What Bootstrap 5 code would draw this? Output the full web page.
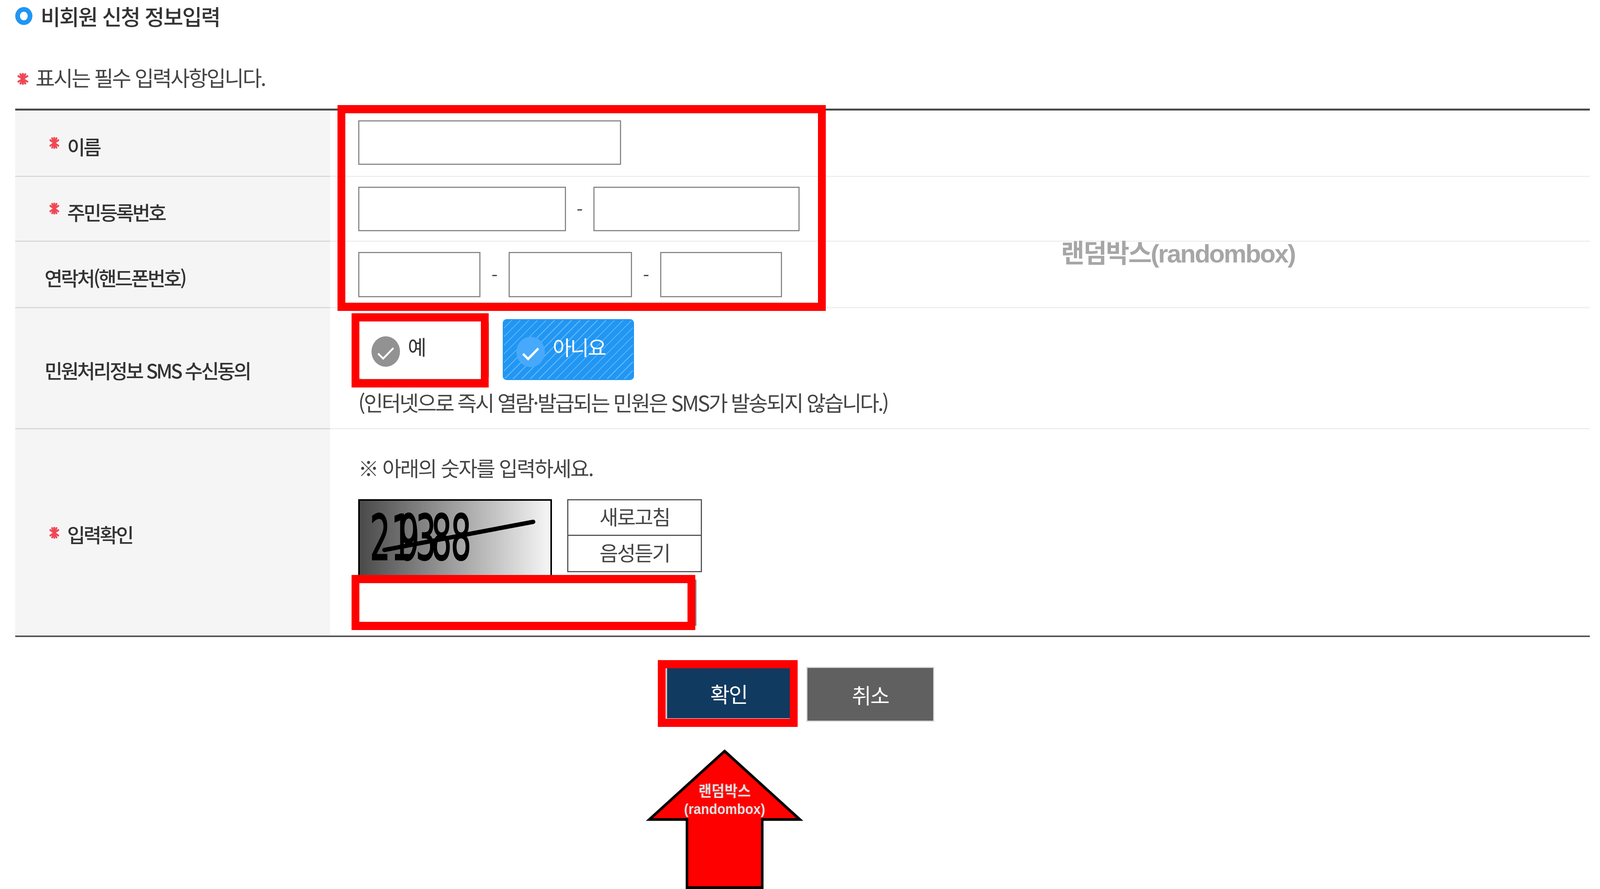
<!doctype html>
<html lang="ko">
<head>
<meta charset="utf-8">
<title>비회원 신청 정보입력</title>
<link href="https://cdn.jsdelivr.net/npm/bootstrap@5.3.0/dist/css/bootstrap.min.css" rel="stylesheet">
<style>
html,body{margin:0;background:#fff;overflow:hidden}
body{font-family:"Noto Sans CJK KR","Liberation Sans",sans-serif;color:#333}
.page-wrap{position:relative;width:100%;height:100vh;padding:0 26px 0 39px;overflow:hidden}
.head-row{height:80px;gap:21px;color:#333}
.head-title{font-size:55px;font-weight:500;letter-spacing:-2.500px;line-height:80px;margin:0}
.ring-mark{width:44px;height:46px;border:12px solid #2196f3;border-radius:50%;flex:none;margin-top:2px}
.req-note{height:198px;padding-top:83px;font-size:54px;letter-spacing:-3.6px;line-height:70px;color:#444;gap:17px}
.req-note svg{width:31px;height:30px;margin-top:24px}
.form-grid{width:100%;border-collapse:collapse;table-layout:fixed;border-top:5px solid #4a4a4a;border-bottom:4px solid #555}
.form-grid th{width:806px;background:#f5f5f5;padding:0 0 0 75px;font-size:50px;font-weight:500;letter-spacing:-4.3px;color:#333;border-bottom:3px solid #d8d8d8;vertical-align:middle}
.form-grid th.th-low{padding-top:16px}
.form-grid th.th-mid{padding-top:10px}
.form-grid td{padding:0 0 0 72px;border-bottom:3px solid #eee;vertical-align:middle}
.form-grid tr:last-child th,.form-grid tr:last-child td{border-bottom:0}
.form-grid td.cell-top{vertical-align:top}
.r-a{height:171px}.r-b{height:166px}.r-c{height:170px}.r-d{height:310px}.r-e{height:531px}
.req-star{width:28px;height:30px;margin:-32px 19px 0 11px;vertical-align:middle}
.form-grid th .star-e{margin-top:-24px}
.box-input{display:block;height:114px;border:3px solid #8a8a8a;border-radius:0;background:#fff;padding:0}
.w-a{width:673px;margin-top:-3px}.w-b{width:532px}.w-c{width:528px}
.w-d{width:313px;height:116px}.w-e{width:316px;height:116px}.w-f{width:312px;height:116px}
.w-g{width:866px;height:118px;margin-top:10px}
.dash-mark{font-size:46px;color:#444;line-height:1;text-align:center}
.dash-b{width:70px}.dash-c{width:72px}
.check-btn{height:156px;border-radius:10px;font-size:52px;letter-spacing:-3px;padding:0 0 0 34px;gap:20px;line-height:1;display:flex;align-items:center;border:0}
.check-btn span{margin-top:-14px}
.check-btn svg{width:73px;height:78px;flex:none;margin-top:12px}
.btn-off{width:335px;background:#fff;color:#333;border-bottom:3px solid #9a9a9a;border-right:3px solid #bbb}
.btn-on{width:336px;padding-left:32px;background-color:#2196f3;color:#fff;border:3px solid #2196f3;background-clip:padding-box;background-image:repeating-linear-gradient(135deg,#2196f3 0 13px,#5bb4f8 13px 15.500px)}
.choice-row{gap:35px}
.form-grid td.cell-d{padding-top:28px}
.form-grid td.cell-e{padding-top:63px}
.sms-note{font-size:54px;letter-spacing:-4px;line-height:70px;margin:22px 0 0;color:#444;white-space:nowrap}
.captcha-hint{font-size:53px;letter-spacing:-3px;line-height:70px;margin:0 0 46px;color:#444}
.captcha-img{width:496px;height:196px;border:4px solid #000;border-bottom:0;background:linear-gradient(90deg,#4a4a4a,#f6f6f6);flex:none}
.captcha-img svg{display:block;overflow:visible}
.cap-btns{width:345px;margin-left:39px}
.cap-btn{display:block;width:100%;height:94px;border:3px solid #555;border-radius:0;background:#fff;color:#444;font-size:52px;letter-spacing:-3px;line-height:1;padding:0 0 6px}
.cap-btn+.cap-btn{margin-top:-3px;height:96px}
.action-row{padding-top:78px;gap:41px;padding-left:1666px}
.act-btn{height:130px;width:318px;border:0;border-radius:0;color:#fff;font-size:54px;letter-spacing:-2.500px;line-height:1;padding:4px 0 0}
.act-ok{background:#103a60;border-left:3px solid #bbb}
.act-no{background:#606060;border:3px solid #ddd;width:328px;height:141px;margin-top:-2px}
.mark-box{position:absolute;border-style:solid;border-color:#f00;border-width:21px 20px;pointer-events:none}
.mb-1a{left:864px;top:269px;width:1250px;height:527px}
.mb-2a{left:900px;top:802px;width:351px;height:190px}
.mb-3a{left:900px;top:1472px;width:880px;height:141px}
.mb-4a{left:1684px;top:1690px;width:358px;height:171px}
.rand-tag{position:absolute;left:2716px;top:605px;font-family:"Liberation Sans","Noto Sans CJK KR",sans-serif;font-weight:700;font-size:65.500px;line-height:90px;color:#a6a6a6;white-space:nowrap;letter-spacing:-2.800px}
.rand-arrow{position:absolute;left:1653px;top:1919px;width:404px;height:357px}
.rand-arrow text{font-family:"Liberation Sans","Noto Sans CJK KR",sans-serif;font-weight:700;fill:#e0e0e0;text-anchor:middle}
.sym-store{position:absolute;width:0;height:0}
</style>
</head>
<body>
<svg class="sym-store" aria-hidden="true">
  <symbol id="star-sym" viewBox="0 0 30 30" preserveAspectRatio="none"><g stroke="#ef4856" stroke-width="5" stroke-linecap="round"><line x1="15" y1="2" x2="15" y2="28"/><line x1="4" y1="8" x2="26" y2="22"/><line x1="4" y1="22" x2="26" y2="8"/><line x1="9" y1="3" x2="21" y2="27"/><line x1="21" y1="3" x2="9" y2="27"/></g></symbol>
</svg>
<main class="page-wrap">
  <div class="head-row d-flex align-items-center">
    <span class="ring-mark"></span>
    <h1 class="head-title">비회원 신청 정보입력</h1>
  </div>
  <div class="req-note d-flex align-items-start ps-1">
    <svg aria-hidden="true"><use href="#star-sym"/></svg><span>표시는 필수 입력사항입니다.</span>
  </div>
  <table class="form-grid">
    <tr class="r-a">
      <th scope="row" class="th-low"><svg class="req-star" aria-hidden="true"><use href="#star-sym"/></svg>이름</th>
      <td><input class="box-input w-a" type="text" aria-label="이름"></td>
    </tr>
    <tr class="r-b">
      <th scope="row" class="th-low"><svg class="req-star" aria-hidden="true"><use href="#star-sym"/></svg>주민등록번호</th>
      <td><div class="d-flex align-items-center"><input class="box-input w-b" type="text" aria-label="주민등록번호 앞자리"><span class="dash-mark dash-b">-</span><input class="box-input w-c" type="text" aria-label="주민등록번호 뒷자리"></div></td>
    </tr>
    <tr class="r-c">
      <th scope="row" class="th-low">연락처(핸드폰번호)</th>
      <td><div class="d-flex align-items-center"><input class="box-input w-d" type="text" aria-label="연락처 1"><span class="dash-mark dash-c">-</span><input class="box-input w-e" type="text" aria-label="연락처 2"><span class="dash-mark dash-c">-</span><input class="box-input w-f" type="text" aria-label="연락처 3"></div></td>
    </tr>
    <tr class="r-d">
      <th scope="row" class="th-mid">민원처리정보 SMS 수신동의</th>
      <td class="cell-top cell-d">
        <div class="choice-row d-flex">
          <button type="button" class="check-btn btn-off">
            <svg viewBox="0 0 78 78" preserveAspectRatio="none" aria-hidden="true"><circle cx="39" cy="39" r="39" fill="#929292"/><path d="M18 44 32 57 60 30" fill="none" stroke="#fff" stroke-width="5"/></svg><span>예</span>
          </button>
          <button type="button" class="check-btn btn-on">
            <svg viewBox="0 0 78 78" preserveAspectRatio="none" aria-hidden="true"><circle cx="39" cy="39" r="39" fill="#47a9fb"/><path d="M18 44 32 57 60 30" fill="none" stroke="#fff" stroke-width="6"/></svg><span>아니요</span>
          </button>
        </div>
        <p class="sms-note">(인터넷으로 즉시 열람·발급되는 민원은 SMS가 발송되지 않습니다.)</p>
      </td>
    </tr>
    <tr class="r-e">
      <th scope="row" class="th-mid"><svg class="req-star star-e" aria-hidden="true"><use href="#star-sym"/></svg>입력확인</th>
      <td class="cell-top cell-e">
        <p class="captcha-hint">※ 아래의 숫자를 입력하세요.</p>
        <div class="d-flex">
          <div class="captcha-img">
            <svg width="488" height="192" viewBox="0 0 488 192" aria-label="보안문자 이미지">
              <text transform="translate(26 151) scale(.512 1)" x="0 107 145 229 307 405" font-family="DejaVu Sans" font-size="160" stroke="#000" stroke-width="3">219388</text>
              <path d="M63 126 444 54" stroke="#000" stroke-width="11" stroke-linecap="round"/>
            </svg>
          </div>
          <div class="cap-btns">
            <button type="button" class="cap-btn">새로고침</button>
            <button type="button" class="cap-btn">음성듣기</button>
          </div>
        </div>
        <input class="box-input w-g" type="text" aria-label="입력확인">
      </td>
    </tr>
  </table>
  <div class="action-row d-flex align-items-start">
    <button type="button" class="btn act-btn act-ok">확인</button>
    <button type="button" class="btn act-btn act-no">취소</button>
  </div>

  <div class="mark-box mb-1a"></div>
  <div class="mark-box mb-2a"></div>
  <div class="mark-box mb-3a"></div>
  <div class="mark-box mb-4a"></div>
  <div class="rand-tag">랜덤박스(randombox)</div>
  <svg class="rand-arrow" viewBox="0 0 434 357" preserveAspectRatio="none">
    <path d="M217 4 424 179H320.500V353.500H113.500V179H10Z" fill="#f00" stroke="#000" stroke-width="7"/>
    <text x="217" y="120" font-size="39">랜덤박스</text>
    <text x="217" y="165" font-size="36.500">(randombox)</text>
  </svg>
</main>
<script src="https://cdn.jsdelivr.net/npm/bootstrap@5.3.0/dist/js/bootstrap.bundle.min.js"></script>
</body>
</html>
